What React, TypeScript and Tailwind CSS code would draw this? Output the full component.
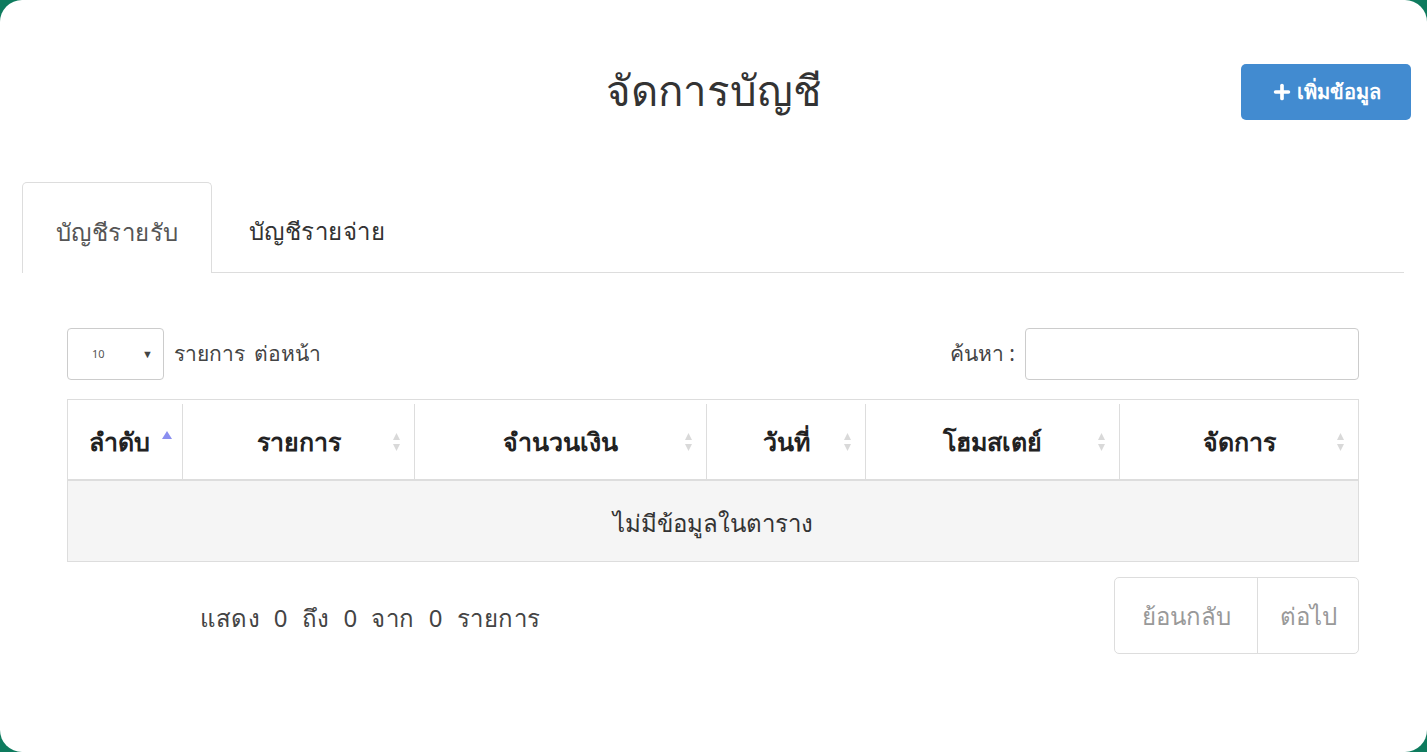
import { Plus } from "lucide-react";

const cols = [
  { label: "ลำดับ", w: "w-[114px]", active: true },
  { label: "รายการ", w: "w-[232px]" },
  { label: "จำนวนเงิน", w: "w-[292px]" },
  { label: "วันที่", w: "w-[159px]" },
  { label: "โฮมสเตย์", w: "w-[254px]" },
  { label: "จัดการ", w: "flex-1" },
];

function SortIcon() {
  return (
    <svg width="9" height="22" viewBox="0 0 9 22" className="text-[#d9d9d9]">
      <path d="M4.5 2 L8 9 L1 9 Z" fill="currentColor" />
      <path d="M4.5 20 L8 13 L1 13 Z" fill="currentColor" />
    </svg>
  );
}

export default function App() {
  return (
    <div className="w-[1427px] h-[752px] bg-[#0e7b5e] font-['Noto_Sans',sans-serif]">
      <div className="w-full h-full bg-white rounded-[22px] flex flex-col">
        <div className="relative flex items-center justify-center h-[182px] pb-[4px]">
          <h1 className="text-[42px] text-[#333] leading-none mt-[2px]">จัดการบัญชี</h1>
          <button className="absolute right-[16px] top-[64px] w-[170px] h-[56px] bg-[#428bd0] rounded-[5px] flex items-center justify-center gap-[4px] text-white font-bold text-[20px]">
            <Plus size={22} strokeWidth={4} />
            <span>เพิ่มข้อมูล</span>
          </button>
        </div>

        <div className="flex items-end mx-[22px] border-b border-[#ddd] h-[91px] mr-[23px]">
          <div className="w-[190px] h-[91px] pt-[7px] border border-b-0 border-[#ddd] rounded-t-[5px] bg-white -mb-px flex items-center justify-center text-[24px] text-[#555] tracking-[0.5px]">
            บัญชีรายรับ
          </div>
          <div className="w-[210px] h-[90px] pt-[7px] flex items-center justify-center text-[24px] text-[#333] tracking-[0.5px]">
            บัญชีรายจ่าย
          </div>
        </div>

        <div className="mx-[67px] mr-[68px] mt-[55px]">
          <div className="flex items-center justify-between h-[52px]">
            <div className="flex items-center gap-[10px]">
              <div className="w-[97px] h-[52px] border border-[#ccc] rounded-[4px] flex items-center justify-between pl-[24px] pr-[10px]">
                <span className="text-[11px] text-[#555]">10</span>
                <span className="text-[11px] text-[#444]">▼</span>
              </div>
              <span className="text-[21px] text-[#444] [word-spacing:4px]">รายการ ต่อหน้า</span>
            </div>
            <div className="flex items-center gap-[10px]">
              <span className="text-[21px] text-[#444]">ค้นหา :</span>
              <div className="w-[334px] h-[52px] border border-[#ccc] rounded-[4px]" />
            </div>
          </div>

          <div className="mt-[19px] border border-[#ddd]">
            <div className="flex h-[81px] pt-[4px] border-b-2 border-[#ddd]">
              {cols.map((c, i) => (
                <div
                  key={c.label}
                  className={`${c.w} relative flex items-center justify-center text-[25px] font-bold text-[#222] ${i > 0 ? "border-l border-[#ddd]" : ""}`}
                >
                  <span className={c.active ? "pr-[12px]" : ""}>{c.label}</span>
                  {c.active ? (
                    <svg width="10" height="8" viewBox="0 0 10 8" className="absolute right-[10px] top-[27px]">
                      <path d="M5 0 L10 8 L0 8 Z" fill="#8a8ff0" />
                    </svg>
                  ) : (
                    <span className="absolute right-[13px] top-[27px]">
                      <SortIcon />
                    </span>
                  )}
                </div>
              ))}
            </div>
            <div className="h-[80px] pt-[4px] bg-[#f5f5f5] flex items-center justify-center text-[24px] text-[#333]">
              ไม่มีข้อมูลในตาราง
            </div>
          </div>

          <div className="flex items-center justify-between mt-[15px]">
            <span className="ml-[133px] pt-[4px] text-[24px] text-[#444] tracking-[0.5px] [word-spacing:7px]">แสดง 0 ถึง 0 จาก 0 รายการ</span>
            <div className="flex h-[77px] border border-[#ddd] rounded-[5px] text-[24px] text-[#999]">
              <div className="w-[143px] flex items-center justify-center border-r border-[#ddd]">ย้อนกลับ</div>
              <div className="w-[100px] flex items-center justify-center">ต่อไป</div>
            </div>
          </div>
        </div>
      </div>
    </div>
  );
}
